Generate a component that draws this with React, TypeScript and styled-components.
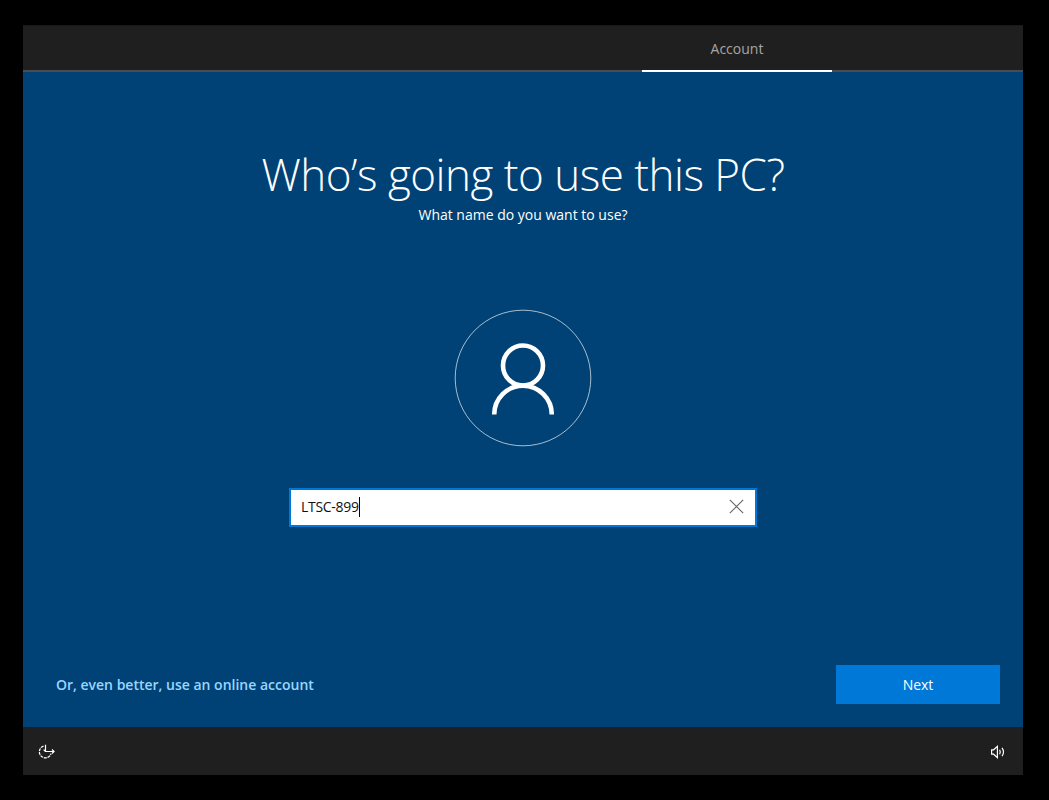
import React, { useState } from "react";
import styled, { createGlobalStyle } from "styled-components";

const GlobalStyle = createGlobalStyle`
  * { box-sizing: border-box; }
  body { margin: 0; background: #000; font-family: "Open Sans", "Noto Sans", sans-serif; }
`;

const Screen = styled.div`
  width: 1049px;
  height: 800px;
  padding: 25px 26px 25px 23px;
  background: #000;
  display: flex;
  overflow: hidden;
`;

const Window = styled.div`
  flex: 1;
  display: flex;
  flex-direction: column;
  background: #004275;
`;

const TopBar = styled.header`
  height: 47px;
  display: flex;
  background: #1f1f1f;
  border-top: 1px solid #191919;
  box-shadow: inset 0 -2px 0 #4c4c4c;
  padding-left: 619px;
`;

const Tab = styled.div`
  width: 190px;
  border-bottom: 2px solid #fff;
  padding-top: 13px;
  text-align: center;
  font-size: 14px;
  line-height: 20px;
  color: #a6a6a6;
`;

const Main = styled.main`
  flex: 1;
  display: flex;
  flex-direction: column;
  align-items: center;
  padding-top: 72px;
`;

const Title = styled.h1`
  margin: 0;
  font-size: 44px;
  line-height: 60px;
  font-weight: 300;
  letter-spacing: -0.5px;
  color: #fff;
  white-space: nowrap;
`;

const Subtitle = styled.p`
  margin: 1px 0 0;
  font-size: 14px;
  line-height: 20px;
  color: #fff;
  white-space: nowrap;
`;

const Avatar = styled.svg`
  display: block;
  margin-top: 84px;
`;

const Field = styled.div`
  width: 468px;
  height: 39px;
  margin-top: 41px;
  display: flex;
  align-items: center;
  justify-content: space-between;
  padding: 0 11px 2px 10px;
  background: #fff;
  border: 2px solid #0078d7;
`;

const Value = styled.span`
  font-size: 14px;
  line-height: 20px;
  letter-spacing: -0.3px;
  color: #111;
  border-right: 1px solid #000;
`;

const ClearButton = styled.button`
  padding: 0;
  border: 0;
  background: none;
  display: flex;
`;

const Actions = styled.div`
  width: 100%;
  margin-top: auto;
  padding: 0 23px 23px 33px;
  display: flex;
  justify-content: space-between;
  align-items: center;
`;

const Link = styled.a`
  font-size: 14px;
  line-height: 20px;
  font-weight: 600;
  color: #99d6ff;
  white-space: nowrap;
`;

const NextButton = styled.button`
  width: 164px;
  height: 39px;
  padding: 0;
  border: 0;
  background: #0078d7;
  color: #fff;
  font-family: inherit;
  font-size: 14px;
`;

const Footer = styled.footer`
  height: 48px;
  display: flex;
  align-items: center;
  justify-content: space-between;
  padding: 1px 17px 0 15px;
  background: #1f1f1f;
`;

export default function App() {
  const [name, setName] = useState("LTSC-899");
  return (
    <>
      <GlobalStyle />
      <Screen>
        <Window>
          <TopBar>
            <Tab>Account</Tab>
          </TopBar>
          <Main>
            <Title>Who’s going to use this PC?</Title>
            <Subtitle>What name do you want to use?</Subtitle>
            <Avatar width="138" height="138" viewBox="0 0 138 138" fill="none" stroke="#fff">
              <circle cx="69" cy="69" r="67.8" strokeWidth="1" opacity="0.65" />
              <circle cx="69" cy="56.5" r="20" strokeWidth="4.6" />
              <path d="M40.2 105.5 A28.8 28.8 0 0 1 97.8 105.5" strokeWidth="4.6" />
            </Avatar>
            <Field>
              <Value>{name}</Value>
              <ClearButton aria-label="Clear" onClick={() => setName("")}>
                <svg width="15" height="15" viewBox="0 0 15 15" stroke="#666" strokeWidth="1.1">
                  <path d="M0.8 0.8 14.2 14.2M14.2 0.8 0.8 14.2" />
                </svg>
              </ClearButton>
            </Field>
            <Actions>
              <Link>Or, even better, use an online account</Link>
              <NextButton>Next</NextButton>
            </Actions>
          </Main>
          <Footer>
            <svg width="18" height="16" viewBox="0 0 18 16" fill="none" stroke="#fff" strokeWidth="1.2">
              <path d="M5.5 2.1 A6 6 0 1 0 13.1 9.5" strokeDasharray="3 0.8" />
              <path d="M7.5 0.8V7.5H16M5.6 5.6 7.5 7.5M14 5.5 16 7.5 14 9.5" />
            </svg>
            <svg width="16" height="14" viewBox="0 0 16 14" fill="none" stroke="#fff" strokeWidth="1.2">
              <path d="M1.6 4.8H3.6L7.4 1.4V12.6L3.6 9.2H1.6Z" />
              <path d="M9.6 4.8Q11 7 9.6 9.2M12 2.8Q15 7 12 11.2" />
            </svg>
          </Footer>
        </Window>
      </Screen>
    </>
  );
}
